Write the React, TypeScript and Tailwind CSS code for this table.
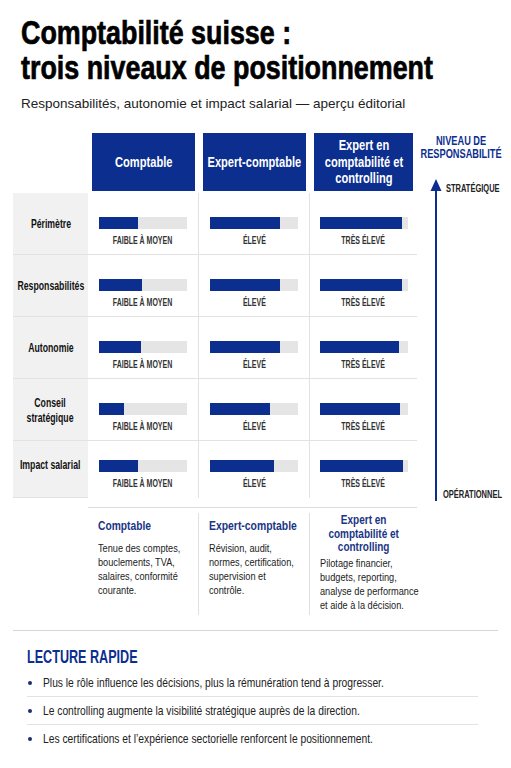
import React from 'react';

const rows = [
  { label: ['Périmètre'], vals: [44, 80, 94] },
  { label: ['Responsabilités'], vals: [49, 80, 94] },
  { label: ['Autonomie'], vals: [48, 80, 90] },
  { label: ['Conseil', 'stratégique'], vals: [28, 68, 91] },
  { label: ['Impact salarial'], vals: [44, 73, 95] },
];

const levels = ['FAIBLE À MOYEN', 'ÉLEVÉ', 'TRÈS ÉLEVÉ'];

const tips = [
  'Plus le rôle influence les décisions, plus la rémunération tend à progresser.',
  'Le controlling augmente la visibilité stratégique auprès de la direction.',
  'Les certifications et l’expérience sectorielle renforcent le positionnement.',
];

const Lines = ({ lines }: { lines: string[] }) => (
  <>
    {lines.map((l, i) => (
      <React.Fragment key={i}>
        {i > 0 && <br />}
        {l}
      </React.Fragment>
    ))}
  </>
);

const App = () => {
  return (
    <div className="w-[511px] h-[768px] bg-white text-[#111] font-['Liberation_Sans',Arial,sans-serif] overflow-hidden">
      {/* titre */}
      <div className="pl-[21px] pt-[15px]">
        <h1 className="origin-left scale-x-[0.79] whitespace-nowrap text-[34px] leading-[35px] font-bold text-black [-webkit-text-stroke:0.7px_black]">
          Comptabilité suisse :<br />trois niveaux de positionnement
        </h1>
        <p className="mt-[11px] text-[13.5px] leading-[16px] text-[#222]">
          Responsabilités, autonomie et impact salarial — aperçu éditorial
        </p>
      </div>

      <div className="mt-[19px] flex">
        <div className="ml-[13px] w-[404px] shrink-0">
          <div className="grid grid-cols-[75px_111px_111px_107px]">
            <div className="h-[62px]" />
            {[['Comptable'], ['Expert-comptable'], ['Expert en', 'comptabilité et', 'controlling']].map((c) => (
              <div key={c[0]} className="h-[62px] px-[4px] py-[2px]">
                <div className="h-full bg-[#0b2e8f] text-white flex items-center justify-center">
                  <div className="shrink-0 whitespace-nowrap scale-x-[0.74] text-center text-[15px] leading-[16.5px] font-bold">
                    <Lines lines={c} />
                  </div>
                </div>
              </div>
            ))}

            {rows.map((r, ri) => {
              const last = ri === rows.length - 1;
              return (
                <React.Fragment key={r.label[0]}>
                  <div
                    className={`bg-[#f1f1f1] border-b border-[#e2e2e2] flex items-center justify-center ${
                      last ? 'h-[57px] pb-[10px]' : 'h-[62px]'
                    }`}
                  >
                    <div className="shrink-0 whitespace-nowrap scale-x-[0.67] text-center text-[13px] leading-[15px] font-bold">
                      <Lines lines={r.label} />
                    </div>
                  </div>
                  {r.vals.map((v, ci) => (
                    <div
                      key={ci}
                      className={`flex flex-col items-center gap-[5px] bg-white border-[#e2e2e2] ${
                        last ? 'h-[57px] pt-[19px]' : 'h-[62px] pt-[24px] border-b'
                      } ${ci < 2 ? 'border-r' : ''}`}
                    >
                      <div className="h-[12px] w-[88px] bg-[#e5e5e5]">
                        <div className="h-full bg-[#0b2e8f]" style={{ width: `${v}%` }} />
                      </div>
                      <div className="whitespace-nowrap scale-x-[0.7] text-[10px] leading-[13px] font-bold text-[#333]">
                        {levels[ci]}
                      </div>
                    </div>
                  ))}
                </React.Fragment>
              );
            })}
          </div>

          {/* descriptions */}
          <div className="ml-[75px] mt-[9px] border-t border-[#dcdcdc] pt-[5px] grid grid-cols-[111px_111px_107px]">
            <div className="h-[102px] border-r border-[#e0e0e0] pl-[10px] pt-[6px]">
              <div className="origin-left scale-x-[0.76] whitespace-nowrap text-[13.5px] leading-[14px] font-bold text-[#1a3585]">
                Comptable
              </div>
              <div className="mt-[8px] origin-left scale-x-[0.8] whitespace-nowrap text-[11.5px] leading-[14px] text-[#222]">
                <Lines lines={['Tenue des comptes,', 'bouclements, TVA,', 'salaires, conformité', 'courante.']} />
              </div>
            </div>
            <div className="h-[102px] border-r border-[#e0e0e0] pl-[10px] pt-[6px]">
              <div className="origin-left scale-x-[0.77] whitespace-nowrap text-[13.5px] leading-[14px] font-bold text-[#1a3585]">
                Expert-comptable
              </div>
              <div className="mt-[8px] origin-left scale-x-[0.8] whitespace-nowrap text-[11.5px] leading-[14px] text-[#222]">
                <Lines lines={['Révision, audit,', 'normes, certification,', 'supervision et', 'contrôle.']} />
              </div>
            </div>
            <div className="h-[102px] pl-[10px]">
              <div className="flex justify-center pr-[10px]">
                <div className="shrink-0 scale-x-[0.74] whitespace-nowrap text-center text-[13.5px] leading-[13.5px] font-bold text-[#1a3585]">
                  <Lines lines={['Expert en', 'comptabilité et', 'controlling']} />
                </div>
              </div>
              <div className="mt-[2.5px] origin-left scale-x-[0.8] whitespace-nowrap text-[11.5px] leading-[14px] text-[#222]">
                <Lines lines={['Pilotage financier,', 'budgets, reporting,', 'analyse de performance', 'et aide à la décision.']} />
              </div>
            </div>
          </div>
        </div>

        {/* axe */}
        <div className="w-[94px] shrink-0 min-w-0 pt-[3px]">
          <div className="flex justify-center pr-[6px]">
            <div className="shrink-0 scale-x-[0.71] whitespace-nowrap text-center text-[13px] leading-[13px] font-bold text-[#0b2e8f]">
              NIVEAU DE
              <br />
              RESPONSABILITÉ
            </div>
          </div>
          <div className="mt-[18.5px] ml-[11px] flex h-[322px]">
            <svg width="16" height="322" viewBox="0 0 16 322" className="shrink-0">
              <path d="M8 0 L13.5 12 L2.5 12 Z" fill="#0b2e8f" />
              <line x1="8" y1="10" x2="8" y2="322" stroke="#0b2e8f" strokeWidth="2" />
            </svg>
            <div className="flex flex-col justify-between pt-[4px] text-[10px] leading-[12px] font-bold text-[#222]">
              <span className="origin-left scale-x-[0.75] whitespace-nowrap ml-[2px]">STRATÉGIQUE</span>
              <span className="origin-left scale-x-[0.75] whitespace-nowrap -ml-[1px]">OPÉRATIONNEL</span>
            </div>
          </div>
        </div>
      </div>

      <div className="mx-[13px] mt-[15px] border-t border-[#d6d6d6]" />

      {/* lecture rapide */}
      <div className="px-[27px] pt-[16px]">
        <div className="origin-left scale-x-[0.72] whitespace-nowrap text-[17.5px] leading-[20px] font-bold text-[#0b2e8f]">
          LECTURE RAPIDE
        </div>
        <ul className="mt-[2px] w-[451px]">
          {tips.map((t, i) => (
            <li key={i} className={`flex items-center h-[28px] ${i < 2 ? 'border-b border-[#e2e2e2]' : ''}`}>
              <span className="ml-[1px] w-[4px] h-[4px] rounded-full bg-[#1b2f6e] shrink-0" />
              <span className="ml-[11px] origin-left scale-x-[0.79] whitespace-nowrap text-[13px] leading-[14px] text-[#222]">{t}</span>
            </li>
          ))}
        </ul>
      </div>
    </div>
  );
};

export default App;
